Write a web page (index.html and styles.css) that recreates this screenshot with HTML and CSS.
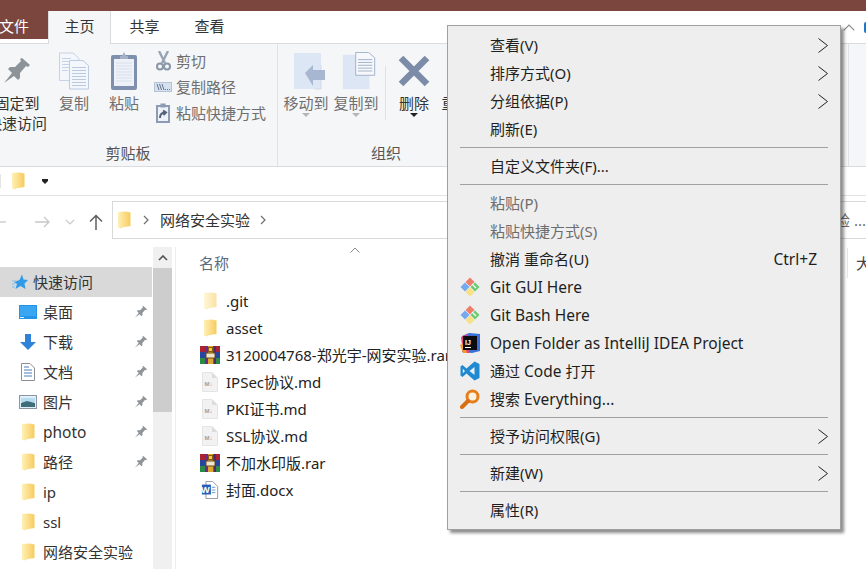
FILE: index.html
```html
<!DOCTYPE html>
<html lang="zh-CN">

<head>
    <meta charset="UTF-8">
    <title>网络安全实验</title>
    <link rel="stylesheet" href="styles.css">
</head>

<body>
    <svg class="defs" width="0" height="0">
        <defs>
            <linearGradient id="fold" x1="0" x2="1" y1="0" y2="0">
                <stop offset="0" stop-color="#fff0b5"/>
                <stop offset="0.55" stop-color="#fbdc85"/>
                <stop offset="1" stop-color="#f5cb5e"/>
            </linearGradient>
            <symbol id="folder" viewBox="0 0 13 18">
                <path d="M0 1 L8 .5 L12.5 1.5 V15 L4 16.5 V17.5 L0 16.5 Z" fill="url(#fold)"/>
            </symbol>
            <symbol id="pin" viewBox="0 0 26 26">
                <path d="M0 25 L8 15 L4 11 L6 9 L11 9 L17 3 L16 1 L18 0 L26 7 L24 9 L22 8 L16 15 L16 20 L14 22 L10 18 Z" fill="currentColor"/>
            </symbol>
            <symbol id="page-copy" viewBox="0 0 30 37">
                <path d="M0.5 .5 H14 L20 6 V28 H.5 Z" fill="#f3f6fb" stroke="#c6d3e6"/>
                <path d="M3 6 H12 M3 9 H16 M3 12 H16 M3 15 H16 M3 18 H9" stroke="#c6d3e6"/>
                <path d="M10.5 8 H24 L29.5 13 V36.5 H10.5 Z" fill="#f3f6fb" stroke="#bccbe0"/>
                <path d="M13 15 H27 M13 18 H27 M13 21 H27 M13 24 H27 M13 27 H27 M13 30 H27 M13 33 H27" stroke="#b9c9de"/>
            </symbol>
            <symbol id="paste" viewBox="0 0 26 38">
                <rect x="0" y="3" width="26" height="35" rx="2" fill="#7e90ae"/>
                <rect x="3" y="7" width="20" height="27" fill="#eef2f8"/>
                <path d="M5 11 H21 M5 14 H21 M5 17 H21 M5 20 H21 M5 23 H21 M5 26 H21 M5 29 H21" stroke="#d6dfec"/>
                <path d="M9 7 V4 H11 L13 0 L15 4 H17 V7 Z" fill="#a3b1c8"/>
            </symbol>
            <symbol id="scissors" viewBox="0 0 15 20">
                <path d="M3 0 L9 12 M12 0 L6 12" stroke="#98a4b4" stroke-width="2.4" fill="none"/>
                <circle cx="4" cy="15.5" r="3" stroke="#8996a8" stroke-width="2" fill="none"/>
                <circle cx="11" cy="15.5" r="3" stroke="#8996a8" stroke-width="2" fill="none"/>
            </symbol>
            <symbol id="copy-path" viewBox="0 0 18 10">
                <rect x=".5" y=".5" width="17" height="9" fill="#d6e1f0" stroke="#b4c3d8"/>
                <path d="M3 2 L5 8 M5.5 2 L7.5 8 M8 2 L10 8" stroke="#66758c"/>
                <path d="M11 7.5 H12 M13 7.5 H14 M15 7.5 H16" stroke="#66758c"/>
            </symbol>
            <symbol id="shortcut" viewBox="0 0 14 20">
                <rect x="1" y="3" width="12" height="16" fill="#eef2f8" stroke="#8c9cb4" stroke-width="2"/>
                <rect x="4.5" y="0.5" width="5" height="4" fill="#8c9cb4"/>
                <path d="M4 15 C4 11 6 9.5 9 9.5 M7 7.5 L10 9.5 L7.5 12" stroke="#51617a" stroke-width="2" fill="none"/>
            </symbol>
            <symbol id="move-to" viewBox="0 0 34 38">
                <rect x="2" y="1" width="27" height="36" fill="#dce6f4"/>
                <path d="M29 13 V37 H23" fill="none" stroke="#cfdbec"/>
                <path d="M13 21 L21 13 V18 H33 V28 H21 V34 Z" fill="#a8b7d1"/>
            </symbol>
            <symbol id="copy-to" viewBox="0 0 34 40">
                <rect x="0" y="3" width="28" height="36" fill="#dce6f4"/>
                <path d="M13.5 .5 H27 L33.5 6 V24.5 H13.5 Z" fill="#f6f8fc" stroke="#9fb0c8"/>
                <path d="M16 8 H31 M16 11 H31 M16 14 H31 M16 17 H31 M16 20 H31" stroke="#9fb0c8"/>
            </symbol>
            <symbol id="cross" viewBox="0 0 32 32">
                <path d="M3 3 L29 29 M29 3 L3 29" stroke="#7c8ba8" stroke-width="6.5"/>
            </symbol>
            <symbol id="quick" viewBox="0 0 16 16">
                <path d="M10 .5 L11.5 5.5 L16 6 L12.5 9.5 L13.5 15 L8.5 12 L3.5 15 L5 10 L2 8 L7.5 6 Z" fill="#2f9be8"/>
                <path d="M0 7 H4 M0 10 H3 M0 13 H3" stroke="#7fc0f2"/>
            </symbol>
            <symbol id="desktop" viewBox="0 0 18 14">
                <rect x="0" y="0" width="18" height="14" fill="#2295ea"/>
                <rect x="1" y="1" width="16" height="10" fill="#3aa6f2"/>
                <path d="M1 12.5 H5" stroke="#dff1ff"/>
            </symbol>
            <symbol id="download" viewBox="0 0 16 16">
                <path d="M5 0 H11 V8 H16 L8 16 L0 8 H5 Z" fill="#2f82d8"/>
            </symbol>
            <symbol id="docs" viewBox="0 0 14 18">
                <path d="M.5 .5 H9 L13.5 5 V17.5 H.5 Z" fill="#fff" stroke="#8a8f96"/>
                <path d="M3 4 H8 M3 7 H11 M3 10 H11 M3 13 H11" stroke="#4f7fb5"/>
            </symbol>
            <symbol id="pictures" viewBox="0 0 18 14">
                <rect x=".5" y=".5" width="17" height="13" fill="#dff0fb" stroke="#8c97a3"/>
                <path d="M2 3 H16 V7 H2 Z" fill="#b7dcef"/>
                <path d="M2 8 L8 6 L16 8 V12 H2 Z" fill="#3d6e7a"/>
            </symbol>
            <symbol id="rar" viewBox="0 0 20 18">
                <rect x="0" y="0" width="20" height="6" fill="#a82430"/>
                <rect x="0" y="6" width="20" height="6" fill="#27459c"/>
                <rect x="0" y="12" width="20" height="6" fill="#2c8a47"/>
                <rect x="5" y="0" width="3" height="18" fill="#6d2a8b"/>
                <rect x="14" y="0" width="2" height="18" fill="#4b2a70"/>
                <rect x="8" y="0" width="5" height="18" fill="#e0a72e"/>
                <rect x="6" y="7" width="9" height="5" fill="#efe7cf" stroke="#6b4a1c"/>
                <rect x="8.5" y="1.5" width="4" height="4" fill="#f6c93f" stroke="#8a5a12"/>
            </symbol>
            <symbol id="word" viewBox="0 0 18 20">
                <path d="M4.5 .5 H12 L17.5 6 V19.5 H4.5 Z" fill="#fff" stroke="#8b9098"/>
                <path d="M11 7 H15 M11 10 H15 M11 13 H15" stroke="#5b8ed0"/>
                <rect x="0" y="4" width="10" height="11" fill="#2460b8"/>
            </symbol>
            <symbol id="md" viewBox="0 0 16 20">
                <path d="M.5 .5 H10 L15.5 6 V19.5 H.5 Z" fill="#f2f2f2" stroke="#e4e4e4"/>
                <path d="M10 .5 V6 H15.5 Z" fill="#dcdcdc"/>
                <text x="2.5" y="14" class="md-text">M↓</text>
            </symbol>
            <symbol id="git" viewBox="0 0 20 20">
                <path d="M10 .5 L14.5 5 L10 9.5 L5.5 5 Z" fill="#ee7e6c"/>
                <path d="M5 5.5 L9.5 10 L5 14.5 L.5 10 Z" fill="#72a9ef"/>
                <path d="M15 5.5 L19.5 10 L15 14.5 L10.5 10 Z" fill="#6ccb6e"/>
                <path d="M10 10.5 L14.5 15 L10 19.5 L5.5 15 Z" fill="#f8e084"/>
                <path d="M12 7 L16 11" stroke="#fff" stroke-width="1.2"/>
            </symbol>
            <symbol id="idea" viewBox="0 0 20 20">
                <path d="M2 3 L9 0 L20 1 V18 L12 20 L2 19 Z" fill="#3b6fd8"/>
                <path d="M1 4 L8 1 L9 20 H3 Z" fill="#e8407c"/>
                <path d="M0 12 L4 10 L7 20 H3 Z" fill="#f59a2c"/>
                <rect x="3" y="3" width="14" height="14" fill="#0c0c10"/>
                <path d="M5 14.5 H11" stroke="#fff"/>
                <text x="5" y="11.5" class="idea-text">IJ</text>
            </symbol>
            <symbol id="vscode" viewBox="0 0 20 20">
                <path fill-rule="evenodd" d="M14.5 .5 L19.5 3 V17 L14.5 19.5 L6.5 12.5 L2.5 16 L.5 14.5 V5.5 L2.5 4 L6.5 7.5 Z M14.5 6 L9.5 10 L14.5 14 Z M2.8 7.8 V12.2 L5 10 Z" fill="#1f8ad2"/>
            </symbol>
            <symbol id="everything" viewBox="0 0 20 20">
                <circle cx="12.5" cy="7.5" r="5.5" fill="#fdf2e0" stroke="#e57f1c" stroke-width="3"/>
                <path d="M8 12 L2 18" stroke="#d96f14" stroke-width="4" stroke-linecap="round"/>
            </symbol>
            <symbol id="more" viewBox="0 0 10 15">
                <path d="M.5 .5 L9.5 7.5 L.5 14.5" fill="none" stroke="#222"/>
            </symbol>
        </defs>
    </svg>

    <div class="window">
        <div class="titlebar"></div>

        <div class="tabs">
            <div class="tab-file">文件</div>
            <div class="tab tab-active">主页</div>
            <div class="tab">共享</div>
            <div class="tab">查看</div>
            <div class="tab-right">
                <svg class="collapse" viewBox="0 0 10 6"><path d="M.5 5.5 L5 1 L9.5 5.5" fill="none" stroke="#8a8a8a"/></svg>
                <span class="help"></span>
            </div>
        </div>

        <div class="ribbon">
            <div class="group group-clip">
                <div class="group-body">
                    <div class="big big-pin">
                        <svg class="ic-pin"><use href="#pin"/></svg>
                        <span class="dark">固定到<br>快速访问</span>
                    </div>
                    <div class="big">
                        <svg class="ic-copy"><use href="#page-copy"/></svg>
                        <span>复制</span>
                    </div>
                    <div class="big">
                        <svg class="ic-paste"><use href="#paste"/></svg>
                        <span>粘贴</span>
                    </div>
                    <div class="small-list">
                        <div class="small"><span class="small-ic"><svg class="ic-scissors"><use href="#scissors"/></svg></span>剪切</div>
                        <div class="small"><span class="small-ic"><svg class="ic-path"><use href="#copy-path"/></svg></span>复制路径</div>
                        <div class="small"><span class="small-ic"><svg class="ic-shortcut"><use href="#shortcut"/></svg></span>粘贴快捷方式</div>
                    </div>
                </div>
                <div class="group-label">剪贴板</div>
            </div>
            <div class="group group-org">
                <div class="group-body">
                    <div class="big">
                        <svg class="ic-move"><use href="#move-to"/></svg>
                        <span>移动到</span>
                        <i class="caret"></i>
                    </div>
                    <div class="big">
                        <svg class="ic-move"><use href="#copy-to"/></svg>
                        <span>复制到</span>
                        <i class="caret"></i>
                    </div>
                    <div class="rule"></div>
                    <div class="big">
                        <svg class="ic-cross"><use href="#cross"/></svg>
                        <span class="dark">删除</span>
                        <i class="caret caret-dark"></i>
                    </div>
                    <div class="big">
                        <span class="dark push-text">重命名</span>
                    </div>
                </div>
                <div class="group-label">组织</div>
            </div>
        </div>

        <div class="quick-bar">
            <span class="qa-stub"></span>
            <svg class="ic-folder"><use href="#folder"/></svg>
            <span class="qa-caret"></span>
        </div>

        <div class="address-row">
            <svg class="nav-arrow arrow-back" viewBox="0 0 16 12"><path d="M1 6 H15 M6 1 L1 6 L6 11" fill="none" stroke="#d0d0d0" stroke-width="1.4"/></svg>
            <svg class="nav-arrow arrow-next" viewBox="0 0 16 12"><path d="M1 6 H15 M10 1 L15 6 L10 11" fill="none" stroke="#c8c8c8" stroke-width="1.4"/></svg>
            <svg class="nav-down" viewBox="0 0 10 6"><path d="M1 1 L5 5 L9 1" fill="none" stroke="#c8c8c8" stroke-width="1.2"/></svg>
            <svg class="nav-up" viewBox="0 0 14 16"><path d="M7 16 V1.5 M1 7.5 L7 1.5 L13 7.5" fill="none" stroke="#606060" stroke-width="1.5"/></svg>
            <div class="address">
                <svg class="ic-folder"><use href="#folder"/></svg>
                <svg class="crumb" viewBox="0 0 6 10"><path d="M1 1 L5 5 L1 9" fill="none" stroke="#707070" stroke-width="1.2"/></svg>
                <span class="crumb-text">网络安全实验</span>
                <svg class="crumb" viewBox="0 0 6 10"><path d="M1 1 L5 5 L1 9" fill="none" stroke="#707070" stroke-width="1.2"/></svg>
                <span class="search">搜索"网络安全实验 ...</span>
            </div>
        </div>

        <div class="main">
            <div class="sidebar">
                <div class="nav-row nav-head"><svg class="ic-quick"><use href="#quick"/></svg>快速访问</div>
                <div class="nav-row"><span class="nav-ic"><svg class="ic-desktop"><use href="#desktop"/></svg></span>桌面<svg class="nav-pin"><use href="#pin"/></svg></div>
                <div class="nav-row"><span class="nav-ic"><svg class="ic-down"><use href="#download"/></svg></span>下载<svg class="nav-pin"><use href="#pin"/></svg></div>
                <div class="nav-row"><span class="nav-ic"><svg class="ic-docs"><use href="#docs"/></svg></span>文档<svg class="nav-pin"><use href="#pin"/></svg></div>
                <div class="nav-row"><span class="nav-ic"><svg class="ic-desktop"><use href="#pictures"/></svg></span>图片<svg class="nav-pin"><use href="#pin"/></svg></div>
                <div class="nav-row"><span class="nav-ic"><svg class="ic-folder"><use href="#folder"/></svg></span><span class="en">photo</span><svg class="nav-pin"><use href="#pin"/></svg></div>
                <div class="nav-row"><span class="nav-ic"><svg class="ic-folder"><use href="#folder"/></svg></span>路径<svg class="nav-pin"><use href="#pin"/></svg></div>
                <div class="nav-row"><span class="nav-ic"><svg class="ic-folder"><use href="#folder"/></svg></span>ip</div>
                <div class="nav-row"><span class="nav-ic"><svg class="ic-folder"><use href="#folder"/></svg></span>ssl</div>
                <div class="nav-row"><span class="nav-ic"><svg class="ic-folder"><use href="#folder"/></svg></span>网络安全实验</div>
            </div>

            <div class="scrollbar">
                <div class="scroll-up"><svg class="scroll-arrow" viewBox="0 0 10 6"><path d="M1 5 L5 1 L9 5" fill="none" stroke="#505050" stroke-width="1.6"/></svg></div>
                <div class="scroll-thumb"></div>
            </div>

            <div class="files">
                <div class="files-head">
                    <svg class="sort" viewBox="0 0 10 6"><path d="M.5 5.5 L5 1 L9.5 5.5" fill="none" stroke="#8a8a8a"/></svg>
                    <span class="col-name">名称</span>
                    <span class="col-size">大小</span>
                </div>
                <div class="file"><span class="file-ic"><svg class="ic-folder faded"><use href="#folder"/></svg></span>.git</div>
                <div class="file"><span class="file-ic"><svg class="ic-folder"><use href="#folder"/></svg></span>asset</div>
                <div class="file"><span class="file-ic"><svg class="ic-rar"><use href="#rar"/></svg></span>3120004768-郑光宇-网安实验.rar</div>
                <div class="file"><span class="file-ic"><svg class="ic-md"><use href="#md"/></svg></span>IPSec协议.md</div>
                <div class="file"><span class="file-ic"><svg class="ic-md"><use href="#md"/></svg></span>PKI证书.md</div>
                <div class="file"><span class="file-ic"><svg class="ic-md"><use href="#md"/></svg></span>SSL协议.md</div>
                <div class="file"><span class="file-ic"><svg class="ic-rar"><use href="#rar"/></svg></span>不加水印版.rar</div>
                <div class="file"><span class="file-ic"><svg class="ic-rar"><use href="#word"/></svg><b class="word-w">W</b></span>封面.docx</div>
            </div>
        </div>

        <div class="menu">
            <div class="item">查看(V)<svg class="more"><use href="#more"/></svg></div>
            <div class="item">排序方式(O)<svg class="more"><use href="#more"/></svg></div>
            <div class="item">分组依据(P)<svg class="more"><use href="#more"/></svg></div>
            <div class="item">刷新(E)</div>
            <div class="sep"></div>
            <div class="item">自定义文件夹(F)...</div>
            <div class="sep"></div>
            <div class="item disabled">粘贴(P)</div>
            <div class="item disabled">粘贴快捷方式(S)</div>
            <div class="item">撤消 重命名(U)<span class="shortcut en">Ctrl+Z</span></div>
            <div class="item"><svg class="item-ic"><use href="#git"/></svg><span class="en">Git GUI Here</span></div>
            <div class="item"><svg class="item-ic"><use href="#git"/></svg><span class="en">Git Bash Here</span></div>
            <div class="item"><svg class="item-ic"><use href="#idea"/></svg><span class="en">Open Folder as IntelliJ IDEA Project</span></div>
            <div class="item"><svg class="item-ic"><use href="#vscode"/></svg>通过 <span class="en">Code</span> 打开</div>
            <div class="item"><svg class="item-ic"><use href="#everything"/></svg>搜索 <span class="en">Everything...</span></div>
            <div class="sep"></div>
            <div class="item">授予访问权限(G)<svg class="more"><use href="#more"/></svg></div>
            <div class="sep"></div>
            <div class="item">新建(W)<svg class="more"><use href="#more"/></svg></div>
            <div class="sep"></div>
            <div class="item">属性(R)</div>
        </div>
    </div>
</body>
</html>
```

FILE: styles.css
```css
html, body {
    margin: 0;
    padding: 0;
    background: #fff;
}

body {
    font-family: 'Noto Sans', 'Noto Sans CJK SC', sans-serif;
    font-size: 15px;
    line-height: 20px;
    color: #1f1f1f;
}

.defs {
    position: absolute;
}

.en {
    font-size: 15.5px;
}

.window {
    position: relative;
    width: 866px;
    height: 569px;
    overflow: hidden;
}

.titlebar {
    height: 11px;
    background: #7b463e;
}

/* tabs */
.tabs {
    display: flex;
    height: 32px;
    border-bottom: 1px solid #dadbdc;
    box-sizing: content-box;
}

.tab-file {
    width: 48px;
    height: 28px;
    line-height: 30px;
    background: #7b463e;
    color: #fff;
    text-indent: -1px;
}

.tab {
    width: 65px;
    line-height: 31px;
    text-align: center;
    color: #333;
}

.tab-active {
    width: 63px;
    height: 33px;
    box-sizing: border-box;
    border: 1px solid #dadbdc;
    border-top: 0;
    border-bottom: 0;
    background: #f5f6f7;
    margin-right: 1px;
}

.tab-right {
    display: flex;
    align-items: center;
    margin-left: auto;
    gap: 9px;
}

.collapse {
    width: 12px;
    height: 7px;
}

.help {
    width: 2px;
    height: 11px;
    background: #1e78c8;
    border-radius: 3px 0 0 3px;
}

/* ribbon */
.ribbon {
    display: flex;
    height: 122px;
    background: #f5f6f7;
    border-bottom: 1px solid #dadbdc;
    color: #6f6f6f;
}

.group {
    display: flex;
    flex-direction: column;
    height: 122px;
    border-right: 1px solid #dfe1e4;
    box-sizing: border-box;
}

.group-clip {
    width: 278px;
}

.group-org {
    width: 571px;
    padding-left: 3px;
}

.group-body {
    display: flex;
    height: 99px;
    padding-top: 4px;
    box-sizing: border-box;
}

.group-label {
    width: 270px;
    text-align: center;
    line-height: 20px;
    color: #555;
}

.group-clip .group-label {
    width: 256px;
}

.group-org .group-label {
    width: 210px;
}

.big {
    display: flex;
    flex-direction: column;
    align-items: center;
    flex: none;
    width: 50px;
    line-height: 20px;
    white-space: nowrap;
    padding-top: 4px;
    box-sizing: border-box;
}

.big svg {
    height: 38px;
    margin-bottom: 3px;
}

.big-pin {
    width: 64px;
    margin-left: -15px;
    text-align: center;
}

.dark {
    color: #333;
}

.push-text {
    margin-top: 41px;
}

.ic-pin {
    width: 26px;
    color: #8d9499;
}

.ic-copy {
    width: 30px;
}

.ic-paste {
    width: 26px;
}

.big .ic-move {
    width: 34px;
    margin-left: 6px;
}

.ic-cross {
    width: 32px;
}

.caret {
    width: 0;
    height: 0;
    border: 4px solid transparent;
    border-top-color: #b5b5b5;
    border-bottom: 0;
}

.caret-dark {
    border-top-color: #222;
}

.rule {
    width: 1px;
    height: 54px;
    background: #dfe1e4;
    margin: 18px 3px 0 4px;
}

.small-list {
    margin-left: 5px;
}

.small {
    display: flex;
    align-items: center;
    height: 26px;
    white-space: nowrap;
}

.small-ic {
    display: flex;
    justify-content: center;
    width: 18px;
    margin-right: 4px;
}

.ic-scissors {
    width: 15px;
    height: 20px;
}

.ic-path {
    width: 18px;
    height: 10px;
}

.ic-shortcut {
    width: 14px;
    height: 20px;
}

/* quick access bar */
.quick-bar {
    display: flex;
    align-items: center;
    height: 28px;
    border-bottom: 1px solid #e3e3e3;
}

.qa-stub {
    width: 1px;
    height: 14px;
    background: #e4e4e4;
}

.ic-folder {
    width: 13px;
    height: 18px;
    flex: none;
}

.quick-bar .ic-folder {
    margin-left: 11px;
}

.qa-caret {
    width: 0;
    height: 0;
    margin: 3px 0 0 17px;
    border: 3px solid transparent;
    border-top-color: #222;
    border-bottom: 0;
    box-shadow: 0 -2px 0 0 #222;
}

/* address bar */
.address-row {
    display: flex;
    align-items: flex-start;
    height: 51px;
}

.nav-arrow {
    width: 16px;
    height: 12px;
    margin-top: 20px;
}

.arrow-back {
    margin-left: -9px;
}

.arrow-next {
    margin-left: 27px;
}

.nav-down {
    width: 10px;
    height: 6px;
    margin: 23px 0 0 15px;
}

.nav-up {
    width: 14px;
    height: 16px;
    margin: 18px 0 0 14px;
}

.address {
    display: flex;
    align-items: center;
    flex: 1;
    height: 38px;
    margin: 5px 0 0 9px;
    padding-left: 5px;
    box-sizing: border-box;
    border: 1px solid #d9d9d9;
    border-right: 0;
    overflow: hidden;
}

.crumb {
    width: 6px;
    height: 10px;
    flex: none;
    margin: 0 11px;
}

.address .ic-folder + .crumb {
    margin-left: 12px;
}

.crumb-text {
    color: #333;
    margin-right: -1px;
}

.search {
    margin-left: auto;
    color: #6d6d6d;
    white-space: nowrap;
}

/* main area */
.main {
    display: flex;
    height: 322px;
}

.sidebar {
    width: 153px;
    padding-top: 20px;
    box-sizing: border-box;
    flex: none;
}

.nav-row {
    display: flex;
    align-items: center;
    height: 30px;
    padding-left: 19px;
    color: #333;
}

.nav-head {
    margin-right: 1px;
    padding-left: 12px;
    background: #d9d9d9;
}

.ic-quick {
    width: 16px;
    height: 16px;
    margin-right: 5px;
}

.nav-ic {
    display: flex;
    justify-content: center;
    width: 18px;
    margin-right: 6px;
}

.ic-desktop {
    width: 18px;
    height: 14px;
}

.ic-down {
    width: 16px;
    height: 16px;
}

.ic-docs {
    width: 14px;
    height: 18px;
}

.nav-pin {
    width: 12px;
    height: 12px;
    margin-left: auto;
    margin-right: 6px;
    color: #8f9499;
}

.scrollbar {
    width: 19px;
    flex: none;
    background: #f0f0f0;
}

.scroll-up {
    display: flex;
    align-items: center;
    justify-content: center;
    height: 21px;
}

.scroll-arrow {
    width: 10px;
    height: 6px;
}

.scroll-thumb {
    height: 144px;
    background: #cdcdcd;
}

.files {
    flex: 1;
    margin-left: 3px;
    padding-left: 23px;
    border-left: 1px solid #eeeeee;
}

.files-head {
    position: relative;
    display: flex;
    align-items: center;
    height: 32px;
    margin-bottom: 8px;
    color: #5a6b80;
}

.sort {
    position: absolute;
    left: 151px;
    top: 0;
    width: 10px;
    height: 6px;
}

.col-size {
    margin-left: auto;
    width: 19px;
    height: 30px;
    line-height: 30px;
    padding-left: 8px;
    box-sizing: border-box;
    border-left: 1px solid #e5e5e5;
    overflow: hidden;
    color: #444;
}

.file {
    display: flex;
    align-items: center;
    height: 27px;
    white-space: nowrap;
    color: #222;
}

.file-ic {
    position: relative;
    display: flex;
    justify-content: center;
    width: 20px;
    margin: 0 6px 0 1px;
}

.faded {
    opacity: 0.55;
}

.ic-rar {
    width: 20px;
    height: 18px;
}

.ic-md {
    width: 16px;
    height: 20px;
}

.md-text {
    font: bold 6px 'Liberation Sans', sans-serif;
    fill: #a0a0a0;
}

.word-w {
    position: absolute;
    left: 1px;
    top: 2px;
    color: #fff;
    font-size: 9px;
    line-height: 13px;
}

.idea-text {
    font: bold 7px 'Liberation Sans', sans-serif;
    fill: #fff;
}

/* context menu */
.menu {
    position: absolute;
    left: 447px;
    top: 25px;
    width: 394px;
    height: 505px;
    box-sizing: border-box;
    padding: 5px 0;
    background: #eeeeee;
    border: 1px solid #a0a0a0;
    box-shadow: 3px 3px 3px rgba(0, 0, 0, 0.45);
    color: #1f1f1f;
}

.item {
    position: relative;
    display: flex;
    align-items: center;
    gap: 4px;
    height: 28px;
    padding: 0 12px 0 42px;
    white-space: nowrap;
}

.disabled {
    color: #6d6d6d;
}

.sep {
    height: 1px;
    margin: 4px 12px;
    background: #a0a0a0;
}

.more {
    width: 10px;
    height: 15px;
    margin-left: auto;
}

.shortcut {
    margin-left: auto;
    margin-right: 11px;
}

.item-ic {
    position: absolute;
    left: 12px;
    top: 4px;
    width: 20px;
    height: 20px;
}
```
